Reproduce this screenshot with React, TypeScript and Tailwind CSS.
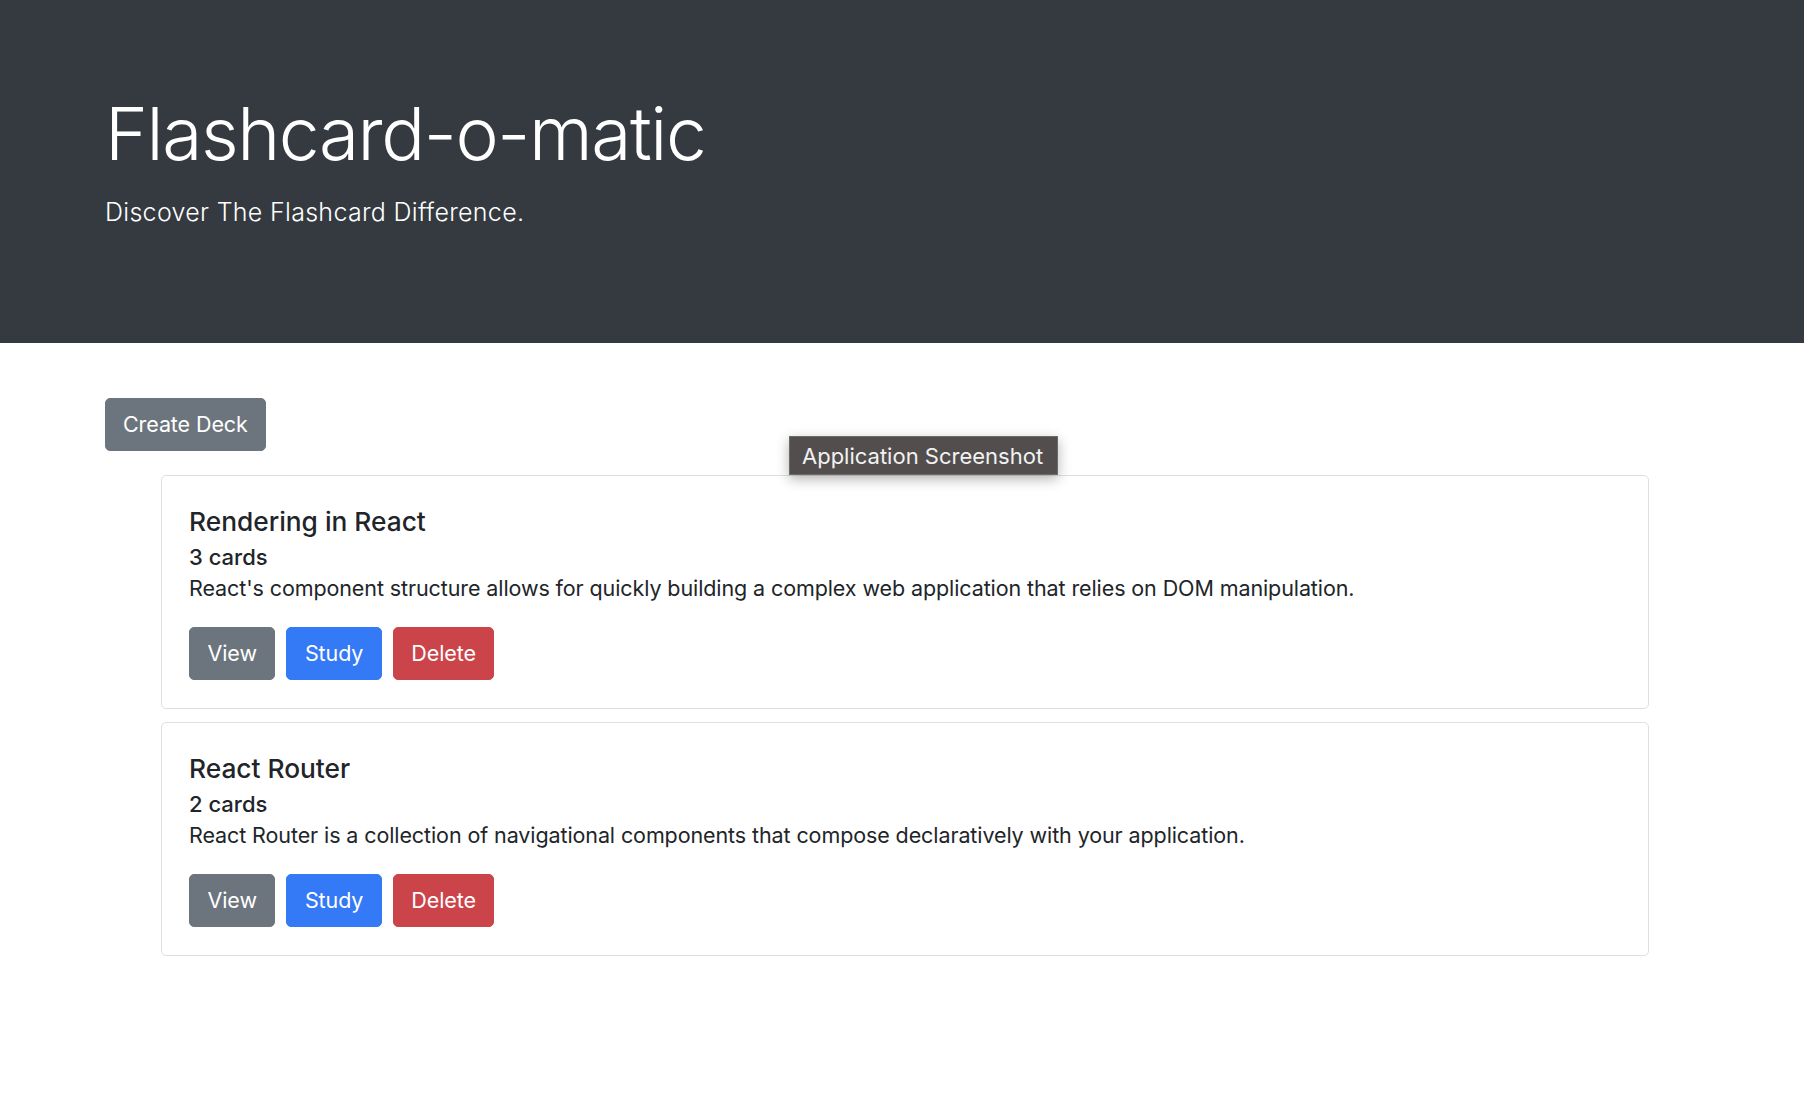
import React from 'react';

interface Deck {
  id: number;
  name: string;
  count: number;
  description: string;
}

const decks: Deck[] = [
  {
    id: 1,
    name: 'Rendering in React',
    count: 3,
    description:
      "React's component structure allows for quickly building a complex web application that relies on DOM manipulation.",
  },
  {
    id: 2,
    name: 'React Router',
    count: 2,
    description:
      'React Router is a collection of navigational components that compose declaratively with your application.',
  },
];

const btn = 'h-[53px] px-[17.5px] border rounded-[5px] text-[21.5px] leading-[33px] tracking-[-0.1px] text-white';

const DeckCard: React.FC<{ deck: Deck }> = ({ deck }) => (
  <div className="border border-[#dfdfdf] rounded-[5px] bg-white px-[27px] pt-[30px] pb-[28px]">
    <h5 className="text-[26.3px] leading-[32px] font-medium text-[#212529]">{deck.name}</h5>
    <h6 className="mt-[4px] text-[22px] leading-[31px] font-medium text-[#212529]">{deck.count} cards</h6>
    <p className="text-[21.5px] leading-[31px] tracking-[-0.1px] text-[#212529]">{deck.description}</p>
    <div className="mt-[23px] flex gap-[11px]">
      <button className={`${btn} bg-[#6c757d] border-[#6c757d]`}>View</button>
      <button className={`${btn} bg-[#3479f6] border-[#3479f6]`}>Study</button>
      <button className={`${btn} bg-[#cb444a] border-[#cb444a]`}>Delete</button>
    </div>
  </div>
);

export default function App() {
  return (
    <div className="relative min-h-screen bg-white font-['Inter',sans-serif] text-[#212529]">
      {/* Jumbotron */}
      <header className="h-[343px] bg-[#343a40] px-[105px] pt-[89px] text-white">
        <h1 className="text-[73px] leading-[90px] font-light tracking-[-1.4px]">Flashcard-o-matic</h1>
        <p className="mt-[15px] text-[25px] leading-[36px] font-light tracking-[0.3px]">Discover The Flashcard Difference.</p>
      </header>

      <main className="px-[105px] pt-[55px] pb-[40px]">
        <button className="h-[53px] px-[17px] border border-[#6c757d] bg-[#6c757d] rounded-[5px] text-[21.5px] leading-[33px] tracking-[-0.1px] text-white">
          Create Deck
        </button>

        <div className="mt-[24px] ml-[56px] w-[1488px] flex flex-col gap-[13px]">
          {decks.map((deck) => (
            <DeckCard key={deck.id} deck={deck} />
          ))}
        </div>
      </main>

      {/* Tooltip overlay */}
      <div className="absolute left-[789px] top-[436px] h-[39px] w-[269px] flex items-center pl-[12px] bg-[#524e4e] border border-[#6e6a6a] shadow-[0_4px_12px_rgba(0,0,0,0.3)]">
        <span className="text-[22px] leading-none text-[#f2f2f2] whitespace-nowrap">Application Screenshot</span>
      </div>
    </div>
  );
}
